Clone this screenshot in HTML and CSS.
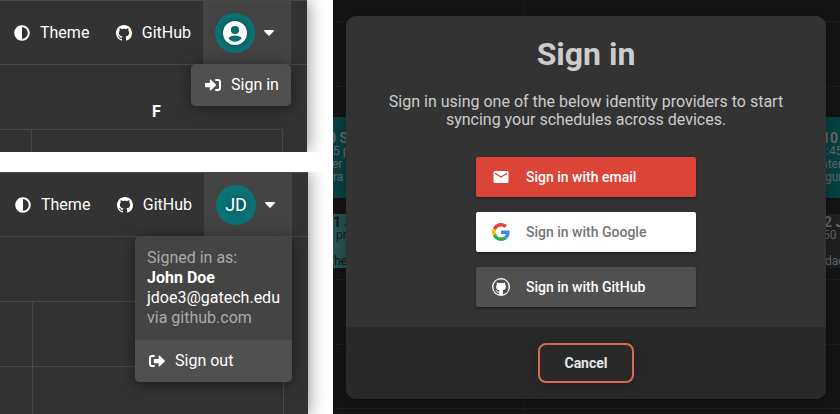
FILE: index.html
```html
<!DOCTYPE html>
<html lang="en">
<head>
<meta charset="utf-8">
<title>Sign in</title>
<link rel="stylesheet" href="styles.css">
</head>
<body>
<svg class="defs" aria-hidden="true">
  <symbol id="theme" viewBox="0 0 512 512"><path d="M8 256c0 137 111 248 248 248s248-111 248-248S393 8 256 8 8 119 8 256zm248 184V72c101.700 0 184 82.300 184 184 0 101.700-82.300 184-184 184z"/></symbol>
  <symbol id="github" viewBox="0 0 16 16"><path d="M8 0C3.580 0 0 3.580 0 8c0 3.540 2.290 6.530 5.470 7.590.4.070.55-.17.55-.38 0-.19-.01-.82-.01-1.490-2.010.37-2.530-.49-2.690-.94-.09-.23-.48-.94-.82-1.130-.28-.15-.68-.52-.01-.53.63-.01 1.080.58 1.230.82.72 1.210 1.870.87 2.330.66.07-.52.28-.87.51-1.070-1.780-.2-3.640-.89-3.640-3.950 0-.87.31-1.590.82-2.150-.08-.2-.36-1.020.08-2.120 0 0 .67-.21 2.200.82.64-.18 1.320-.27 2-.27s1.360.09 2 .27c1.530-1.040 2.200-.82 2.200-.82.44 1.100.16 1.920.08 2.120.51.56.82 1.270.82 2.150 0 3.070-1.870 3.750-3.650 3.950.29.25.54.73.54 1.480 0 1.070-.01 1.930-.01 2.200 0 .21.15.46.55.38A8.010 8.010 0 0 0 16 8c0-4.420-3.580-8-8-8z"/></symbol>
  <symbol id="caret" viewBox="0 0 10 6"><path d="M.8 0h8.400c.7 0 1 .8.5 1.300L5.600 5.400c-.3.300-.9.300-1.200 0L.3 1.300C-.2.800.1 0 .8 0z"/></symbol>
</svg>
<div class="page">
  <div class="shots">
    <section class="panel">
      <header class="bar">
        <a class="item"><svg class="icon"><use href="#theme"/></svg>Theme</a>
        <a class="item"><svg class="icon"><use href="#github"/></svg>GitHub</a>
        <div class="account">
          <span class="avatar"><svg class="person" viewBox="0 0 24 24"><circle cx="12" cy="12" r="12"/><circle class="cut" cx="12" cy="9" r="4.100"/><path class="cut" d="M12 14.600c-2.900 0-5.500.9-6.700 2.700 1.700 2.100 4 3.400 6.700 3.400s5-1.300 6.700-3.400c-1.200-1.800-3.800-2.700-6.700-2.700z"/></svg></span>
          <svg class="caret"><use href="#caret"/></svg>
          <div class="menu">
            <div class="action"><svg class="icon" viewBox="0 0 16 16"><path d="M0 5.900h4.800V3.300c0-.7.800-1 1.200-.5l4.900 4.700c.3.300.3.800 0 1.100L6 13.300c-.5.400-1.200.1-1.200-.6v-2.500H.6c-.4 0-.6-.2-.6-.6z"/><path d="M10.300 2H13a3 3 0 0 1 3 3v6a3 3 0 0 1-3 3h-2.700v-2H13a1 1 0 0 0 1-1V5a1 1 0 0 0-1-1h-2.700z"/></svg>Sign in</div>
          </div>
        </div>
      </header>
      <div class="calendar">
        <div class="days"><b>F</b></div>
        <div class="row"><span></span><span></span></div>
      </div>
    </section>
    <section class="panel second">
      <header class="bar">
        <a class="item"><svg class="icon"><use href="#theme"/></svg>Theme</a>
        <a class="item"><svg class="icon"><use href="#github"/></svg>GitHub</a>
        <div class="account">
          <span class="avatar">JD</span>
          <svg class="caret"><use href="#caret"/></svg>
          <div class="menu">
            <div class="profile">
              <div class="muted">Signed in as:</div>
              <b>John Doe</b>
              <div>jdoe3@gatech.edu</div>
              <div class="muted">via github.com</div>
            </div>
            <div class="action"><svg class="icon" viewBox="0 0 16 16"><path d="M16 8c0 .2-.1.400-.3.600l-4.900 4.700c-.4.400-1.200.1-1.200-.6v-2.500H5.500c-.4 0-.7-.2-.7-.6V6.500c0-.4.300-.6.700-.6h4.100V3.300c0-.7.800-1 1.200-.5l4.900 4.700c.2.100.3.300.3.500z"/><path d="M5.700 2H3a3 3 0 0 0-3 3v6a3 3 0 0 0 3 3h2.700v-2H3a1 1 0 0 1-1-1V5a1 1 0 0 1 1-1h2.700z"/></svg>Sign out</div>
          </div>
        </div>
      </header>
      <div class="calendar">
        <div class="days"></div>
        <div class="row"><span></span><span></span></div>
        <div class="row"><span></span><span></span></div>
      </div>
    </section>
  </div>
  <main class="backdrop">
    <div class="hours"><i></i><i></i><i></i><i></i><i></i><i></i><i></i></div>
    <div class="events">
      <div class="event teal">
        <b class="back-5">0 S</b><div>5 p</div><div class="back-1">er <em>1</em></div><div>ra</div>
      </div>
      <div class="event teal end">
        <b class="back-4">10</b><div>:45</div><div class="back-5">nter</div><div class="back-1">gura</div>
      </div>
      <div class="event light">
        <b>1 J</b><div class="ahead-3">pr</div><div class="gap back-6">The</div>
      </div>
      <div class="event dark end">
        <b class="back-2">2 J</b><div class="back-3">50 p</div><div class="gap back-1">dac</div>
      </div>
    </div>
    <div class="modal">
      <div class="content">
        <h1>Sign in</h1>
        <p>Sign in using one of the below identity providers to start syncing your schedules across devices.</p>
        <div class="providers">
          <div class="provider email"><svg viewBox="0 0 24 24"><path fill="#fff" d="M20 4H4c-1.100 0-2 .9-2 2v12c0 1.100.9 2 2 2h16c1.100 0 2-.9 2-2V6c0-1.100-.9-2-2-2zm0 4-8 5-8-5V6l8 5 8-5z"/></svg>Sign in with email</div>
          <div class="provider google"><svg viewBox="0 0 48 48"><path fill="#ea4335" d="M24 9.500c3.540 0 6.710 1.220 9.210 3.600l6.850-6.850C35.900 2.380 30.470 0 24 0 14.620 0 6.510 5.380 2.560 13.220l7.980 6.190C12.430 13.720 17.740 9.500 24 9.500z"/><path fill="#4285f4" d="M46.980 24.550c0-1.570-.15-3.090-.38-4.550H24v9.020h12.940c-.58 2.960-2.260 5.480-4.780 7.180l7.730 6c4.510-4.180 7.090-10.360 7.090-17.650z"/><path fill="#fbbc05" d="M10.530 28.590A14.500 14.500 0 0 1 9.770 24c0-1.600.27-3.140.76-4.590l-7.980-6.190A24 24 0 0 0 0 24c0 3.880.92 7.540 2.560 10.780z"/><path fill="#34a853" d="M24 48c6.480 0 11.930-2.130 15.890-5.810l-7.730-6c-2.150 1.450-4.920 2.300-8.160 2.300-6.260 0-11.570-4.220-13.470-9.910l-7.980 6.190C6.510 42.620 14.620 48 24 48z"/></svg>Sign in with Google</div>
          <div class="provider hub"><svg viewBox="0 0 18 18"><circle cx="9" cy="9" r="9" fill="#fff"/><use href="#github" x="1.300" y="1.300" width="15.400" height="15.400" fill="#505050"/></svg>Sign in with GitHub</div>
        </div>
      </div>
      <div class="footer"><button class="cancel">Cancel</button></div>
    </div>
  </main>
</div>
</body>
</html>
```
FILE: styles.css
```css
* { box-sizing: border-box; }
body {
  margin: 0;
  background: #fff;
  color: #fff;
  font: 16px/20px Roboto, sans-serif;
}
svg { display: block; flex: none; fill: currentColor; }
.defs { width: 0; height: 0; position: absolute; }
.page { display: flex; width: 840px; height: 414px; overflow: hidden; }
.shots {
  display: flex;
  flex-direction: column;
  gap: 20px;
  width: 333px;
  overflow: hidden;
}
.panel {
  width: 307px;
  height: 152px;
  flex: none;
  background: #333;
  box-shadow: 2px 0 15px rgba(0, 0, 0, .4);
  clip-path: inset(0 -26px 0 0);
}
.panel.second { width: 308px; height: 242px; }
.bar {
  display: flex;
  height: 65px;
  padding-left: 14px;
  border-top: 1px solid #484848;
  border-bottom: 1px solid #484848;
}
.second .bar { padding-left: 15px; }
.item { display: flex; align-items: center; gap: 10px; }
.item + .item { margin-left: 27px; gap: 9.400px; }
.icon { width: 16px; height: 16px; }
.account {
  position: relative;
  display: flex;
  align-items: center;
  width: 88px;
  padding-left: 12px;
  margin-left: auto;
  margin-right: 16px;
  background: #444;
}
.avatar {
  display: flex;
  align-items: center;
  justify-content: center;
  width: 40px;
  height: 40px;
  border-radius: 50%;
  background: #0b7477;
  font-size: 18px;
  text-shadow: 0 0 8px rgba(0, 0, 0, .5);
}
.person { width: 24px; height: 24px; filter: drop-shadow(0 0 4px rgba(0, 0, 0, .4)); }
.cut { fill: #0b6b6e; }
.caret { width: 10px; height: 6px; margin-left: 9px; margin-top: 1px; }
.menu {
  position: absolute;
  top: 63px;
  right: 0;
  width: 100px;
  border-radius: 5px;
  overflow: hidden;
  background: #444;
  box-shadow: 0 2px 16px rgba(0, 0, 0, .5);
  z-index: 2;
}
.second .menu { width: 157px; border-top-right-radius: 0; }
.action {
  display: flex;
  align-items: center;
  gap: 10px;
  height: 42px;
  padding: 0 14px;
  background: #505050;
  white-space: nowrap;
}
.profile { height: 104px; padding: 12px; white-space: nowrap; }
.profile b { display: block; }
.muted { color: #aaa; }
.days { height: 64px; padding: 37px 0 0 152px; }
.row { display: flex; width: 283px; height: 65px; border-top: 1px solid #484848; }
.row span { border-right: 1px solid #484848; width: 251px; }
.row span:first-child { width: 32px; }
.second .row { width: 284px; }
.second .row span:first-child { width: 33px; }

.backdrop {
  position: relative;
  display: grid;
  width: 507px;
  height: 414px;
  background: #141414;
  overflow: hidden;
}
.hours, .events { grid-area: 1 / 1; min-width: 0; }
.hours {
  display: flex;
  flex-direction: column;
  background: linear-gradient(#1c1c1c, #1c1c1c) 190px 0 / 1px 100% no-repeat;
}
.hours i { flex: none; height: 64.500px; border-bottom: 1px solid #1d1d1d; }
.hours i:first-child { height: 22px; }
.events {
  display: grid;
  grid-template-columns: 253px 254px;
  grid-template-rows: 81px 54px;
  gap: 16px 0;
  padding-top: 117px;
  font-size: 12px;
  line-height: 13px;
  white-space: nowrap;
}
.event { padding-top: 14px; overflow: hidden; color: #666; }
.event.end { padding-left: 240px; }
.event b { display: block; font-size: 14px; line-height: 14px; }
.event em { font-style: normal; color: #175c78; }
.event.light, .event.dark { padding-top: 1px; }
.teal { background: #074141; }
.light { background: #285252; color: #161616; }
.dark { background: #202020; }
.gap { margin-top: 13px; }
.ahead-3 { margin-left: 3px; }
.back-1 { margin-left: -1px; }
.back-2 { margin-left: -2px; }
.back-3 { margin-left: -3px; }
.back-4 { margin-left: -4px; }
.back-5 { margin-left: -5px; }
.back-6 { margin-left: -6px; }
.modal {
  position: absolute;
  left: 13px;
  top: 16px;
  width: 480px;
  height: 383px;
  border-radius: 10px;
  overflow: hidden;
  background: #333;
  color: #ccc;
  box-shadow: 0 2px 16px rgba(0, 0, 0, .3);
}
.content { height: 311px; text-align: center; }
h1 { margin: 0; padding-top: 19px; font-size: 32px; line-height: 38px; }
.content p { width: 400px; margin: 20px auto 28px; line-height: 18px; }
.providers { display: flex; flex-direction: column; align-items: center; gap: 15px; }
.provider {
  display: flex;
  align-items: center;
  gap: 16px;
  width: 220px;
  height: 40px;
  padding-left: 16px;
  border-radius: 2px;
  color: #fff;
  font-size: 14px;
  font-weight: 500;
  box-shadow: 0 2px 2px rgba(0, 0, 0, .14), 0 3px 1px -2px rgba(0, 0, 0, .2), 0 1px 5px rgba(0, 0, 0, .12);
}
.provider svg { width: 18px; height: 18px; }
.email { background: #db4437; }
.google { background: #fff; color: #757575; }
.hub { background: #505050; }
.footer {
  display: flex;
  align-items: center;
  justify-content: center;
  height: 72px;
  background: #292929;
}
.cancel {
  width: 96px;
  height: 40px;
  padding: 0;
  border: 2px solid #da6857;
  border-radius: 8px;
  background: #292929;
  color: #e6e6e6;
  font: bold 14px Roboto, sans-serif;
  box-shadow: 0 2px 16px rgba(0, 0, 0, .22);
}
```
